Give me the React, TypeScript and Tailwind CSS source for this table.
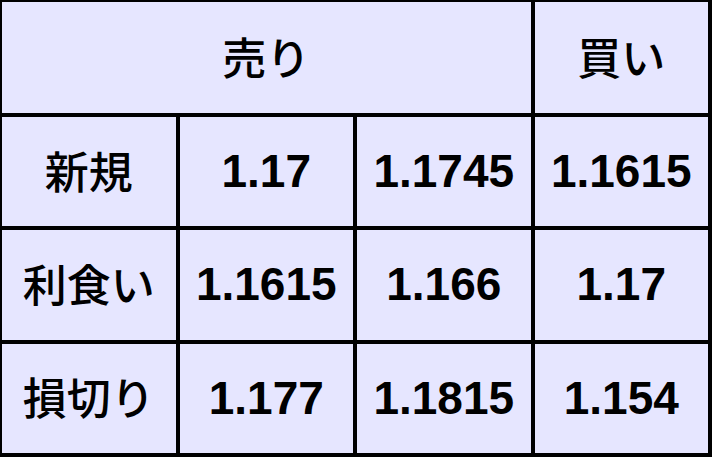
const rows = [
  { label: '新規', values: ['1.17', '1.1745', '1.1615'] },
  { label: '利食い', values: ['1.1615', '1.166', '1.17'] },
  { label: '損切り', values: ['1.177', '1.1815', '1.154'] },
];

const cell = 'flex items-center justify-center bg-[#e6e6ff]';
const jp = 'font-["Noto_Sans_CJK_JP","Noto_Sans",sans-serif] text-[44px] font-medium leading-none text-black -translate-y-[2px]';
const num = 'font-["Liberation_Sans",Arial,sans-serif] text-[46px] font-bold text-black';

export default function App() {
  return (
    <main className="h-[457px] w-[712px] bg-black pb-[4px] pl-[2px] pr-[4px] pt-[2px]">
      <div className="grid h-full grid-cols-4 grid-rows-[111px_1fr_1fr_1fr] gap-[4px]">
        <div className={`${cell} col-span-3`}>
          <span className={jp}>売り</span>
        </div>
        <div className={cell}>
          <span className={jp}>買い</span>
        </div>
        {rows.map((row) => (
          <div className="contents" key={row.label}>
            <div className={cell}>
              <span className={jp}>{row.label}</span>
            </div>
            {row.values.map((value, index) => (
              <div className={cell} key={index}>
                <span className={num}>{value}</span>
              </div>
            ))}
          </div>
        ))}
      </div>
    </main>
  );
}
